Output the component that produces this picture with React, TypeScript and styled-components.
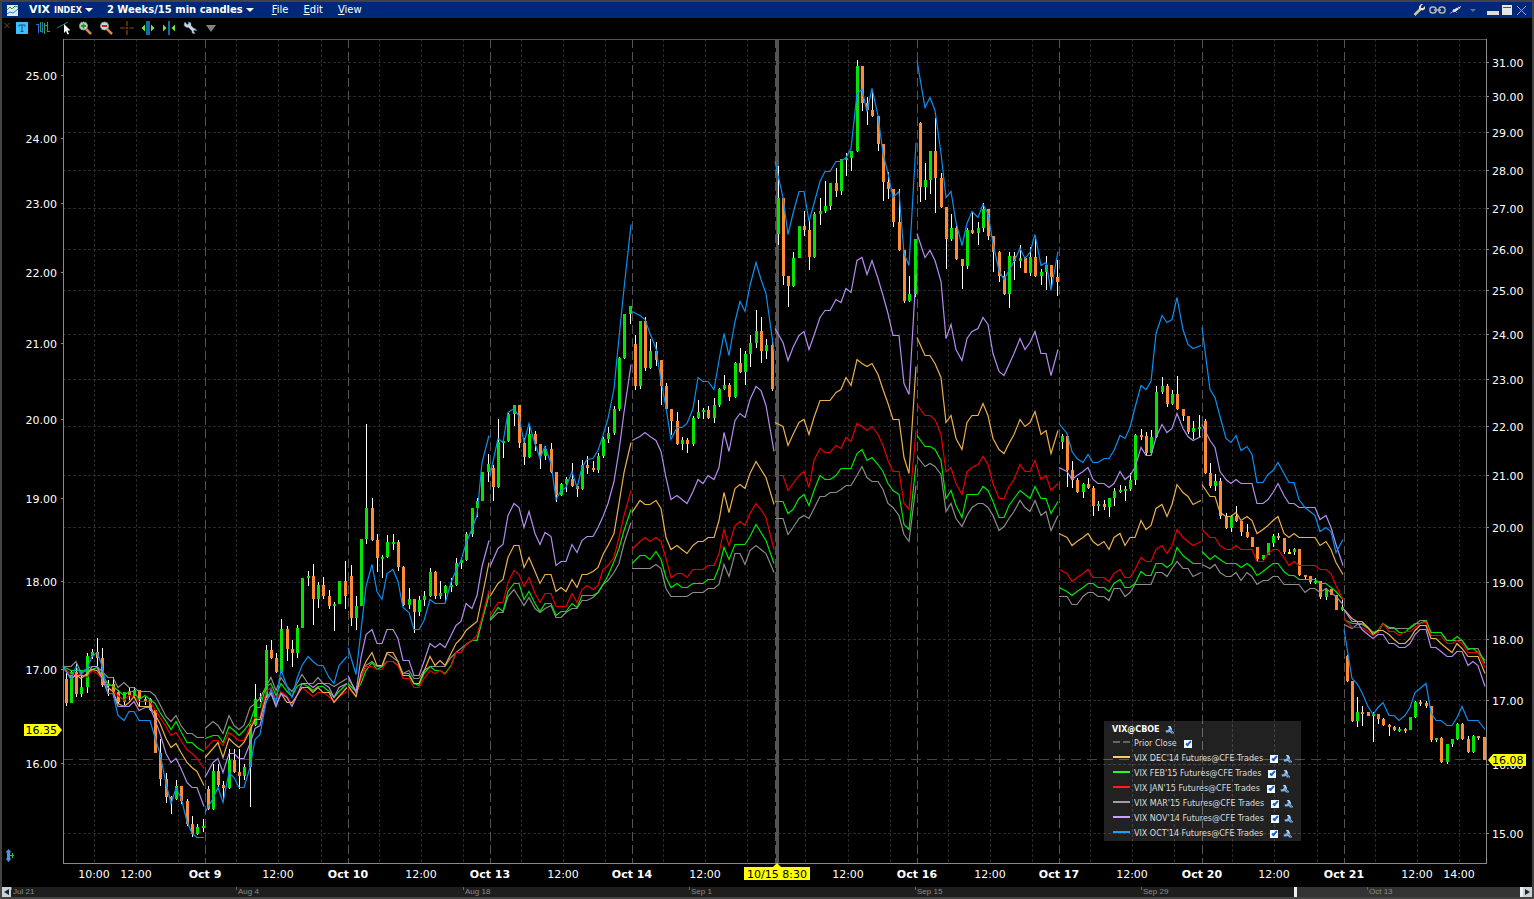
import React from "react";
import styled, { createGlobalStyle } from "styled-components";

const GlobalStyle = createGlobalStyle`
  *, *::before, *::after { box-sizing: border-box; }
  body {
    margin: 0;
    background: #000;
    font-family: "DejaVu Sans", Verdana, sans-serif;
  }
`;

const colors = {
  frame: "#434343",
  title: "#002878",
  up: "#00e600",
  down: "#ff8c32",
  flat: "#ffff00",
  axis: "#8a8a8a",
  grid: "#292929",
  day: "#545454",
  tag: "#ffff00",
  oct: "#0c8ff2",
  nov: "#b48cf0",
  dec: "#eab04e",
  jan: "#e80000",
  feb: "#00e800",
  mar: "#8c8c8c",
};

/* ---------- layout ---------- */

const Frame = styled.main`
  border: 2px solid ${colors.frame};
  background: #000;
  color: #fff;
  min-width: 900px;
`;

const TitleBar = styled.header`
  display: flex;
  align-items: center;
  height: 16px;
  padding: 0 3px 0 5px;
  background: ${colors.title};
`;

const TitleIcon = styled.svg`
  display: block;
  width: 11px;
  height: 11px;
  margin-right: 11px;
`;

const TitleButton = styled.button<{ $size: number; $gap: number }>`
  display: flex;
  align-items: center;
  gap: 3px;
  margin: 0 ${(p) => p.$gap}px 0 0;
  padding: 0;
  border: 0;
  background: none;
  color: #fff;
  font: bold ${(p) => p.$size}px/16px "DejaVu Sans", Verdana, sans-serif;
  white-space: nowrap;
`;

const Small = styled.span`
  font-size: 8px;
`;

const Caret = styled.span<{ $color: string; $w: number }>`
  border: ${(p) => p.$w}px solid transparent;
  border-top-color: ${(p) => p.$color};
  border-bottom: 0;
`;

const Menu = styled.nav`
  display: flex;
  gap: 15px;
  flex: 1;
`;

const MenuButton = styled.button`
  padding: 0;
  border: 0;
  background: none;
  color: #fff;
  font: 10px/16px "DejaVu Sans", Verdana, sans-serif;
`;

const WindowTools = styled.div`
  display: flex;
  align-items: center;
`;

const IconButton = styled.button<{ $w: number }>`
  display: flex;
  align-items: center;
  justify-content: center;
  width: ${(p) => p.$w}px;
  height: 16px;
  padding: 0;
  border: 0;
  background: none;
`;

const ToolBar = styled.div`
  display: flex;
  align-items: center;
  height: 20px;
`;

const Glyph = styled.svg`
  display: block;
  flex: none;
`;

const ChartArea = styled.section`
  position: relative;
`;

const ChartSvg = styled.svg`
  display: block;
  width: 100%;
  height: auto;
`;

const AxisText = styled.text`
  font: 11px "DejaVu Sans", Verdana, sans-serif;
  fill: #fff;
`;

const DayText = styled(AxisText)`
  font-weight: bold;
`;

const TagText = styled(AxisText)`
  fill: #000;
`;

const Legend = styled.div`
  position: absolute;
  right: 231px;
  bottom: 46px;
  width: 197px;
  height: 120px;
  padding: 2px 0 0 8px;
  background: rgba(255, 255, 255, 0.13);
  color: #dcdcdc;
  font-size: 8px;
`;

const LegendTitle = styled.div`
  display: flex;
  align-items: center;
  gap: 5px;
  height: 13px;
  color: #fff;
  font-weight: bold;
`;

const LegendRow = styled.label`
  display: flex;
  align-items: center;
  gap: 4px;
  height: 15px;
  padding-left: 1px;
  white-space: nowrap;
`;

const Swatch = styled.span<{ $color: string; $dashed?: boolean }>`
  width: 17px;
  height: 2px;
  margin-top: -3px;
  background: ${(p) =>
    p.$dashed
      ? `linear-gradient(90deg, ${p.$color} 7px, transparent 7px 10px, ${p.$color} 10px)`
      : p.$color};
`;

const Check = styled.input`
  appearance: none;
  position: relative;
  width: 8px;
  height: 8px;
  margin: 0 1px 0 3px;
  background: #f4f8ff;

  &:checked::after {
    content: "";
    position: absolute;
    left: 3px;
    top: 0;
    width: 3px;
    height: 6px;
    border: solid #1464d2;
    border-width: 0 2px 2px 0;
    transform: rotate(42deg);
  }
`;

const Strip = styled.footer`
  display: flex;
  height: 10px;
  background: #1e1e1e;
`;

const StripButton = styled.button`
  display: flex;
  align-items: center;
  justify-content: center;
  width: 9px;
  height: 10px;
  padding: 0;
  border: 0;
  background: #d0d0d0;
`;

const Track = styled.div`
  position: relative;
  flex: 1;
`;

const Thumb = styled.div`
  position: absolute;
  left: 84.85%;
  right: 0;
  top: 0;
  bottom: 0;
  background: #333;
  border: solid #eee;
  border-width: 0 3px;
`;

const TrackDates = styled.div`
  position: relative;
  display: grid;
  grid-template-columns: 225fr 227fr 226fr 226fr 226fr 226fr 156fr;
`;

const TrackDate = styled.span`
  padding-left: 2px;
  color: #8c8c8c;
  font: 8px/9px "Liberation Sans", Arial, sans-serif;
  background: linear-gradient(#666, #666) 0 0 / 1px 3px no-repeat;
`;

/* ---------- data ---------- */

type Candle = [number, number, number, number, string];

/* One string for each session: high, body top, body bottom, low, direction. */
const candleText = [
  "671,679,703,706,d 671,672,703,703,u 664,672,694,697,d 672,687,694,697,u 653,656,687,693,u 649,652,656,659,u 638,652,658,666,d 648,658,685,687,d 680,684,686,696,u 677,684,692,693,d 690,692,702,704,d 692,692,702,705,u 688,692,695,700,d 687,690,696,697,u 690,690,699,707,d 697,699,701,705,d 698,699,710,711,d 710,710,753,753,d 739,753,779,786,d 773,779,797,803,d 796,797,799,814,d 780,786,799,800,u 786,786,801,804,d 799,801,824,826,d 816,824,834,837,d 824,827,834,835,u 819,826,828,832,u",
  "786,789,809,810,d 764,771,809,810,u 764,771,785,787,d 781,785,788,800,d 749,760,788,789,u 749,760,772,773,d 749,772,776,789,d 764,767,776,780,u 724,725,767,807,u 684,699,725,726,u 693,697,699,702,u 645,650,697,698,u 640,650,658,659,d 653,658,672,673,d 619,629,672,673,u 626,629,649,661,d 640,649,653,667,d 625,628,653,658,u 578,578,628,628,u 571,576,578,586,u 564,576,599,625,d 582,585,599,608,u 577,585,596,599,d 590,596,606,609,d 602,604,606,631,u 581,581,604,604,u 561,581,596,609,d",
  "565,576,618,626,d 596,606,618,630,u 539,539,606,606,u 424,508,539,544,u 498,508,540,541,d 534,540,558,572,d 555,557,559,578,u 535,542,557,558,u 534,542,544,550,u 540,542,567,571,d 566,567,605,606,d 588,599,605,609,u 599,599,612,633,d 596,600,612,616,u 591,596,600,606,u 568,572,596,597,u 571,572,596,599,d 581,593,596,599,u 585,586,593,603,u 578,585,587,592,u 558,563,585,586,u 559,560,563,569,u 532,534,560,561,u 508,508,534,537,u 498,501,508,517,u 472,472,501,501,u 454,464,472,482,u",
  "465,468,487,501,d 419,442,487,488,u 440,441,443,458,u 413,414,441,442,u 405,405,414,426,u 405,405,443,448,d 438,443,457,465,d 424,434,457,458,u 431,434,444,451,d 444,444,456,469,d 446,449,456,460,u 443,449,472,473,d 472,472,495,502,d 483,484,495,496,u 477,479,484,492,u 463,479,486,487,d 484,486,489,497,d 460,465,489,490,u 456,465,468,474,d 461,468,470,472,d 453,456,470,473,u 437,439,456,458,u 427,433,439,443,u 406,409,433,435,u 357,358,409,411,u 314,314,358,359,u 306,306,314,324,u",
  "335,344,386,390,d 321,321,386,389,u 317,321,368,371,d 339,351,368,369,u 342,351,360,366,d 360,360,386,405,d 383,386,409,409,d 409,409,421,435,d 412,421,444,445,d 437,440,444,450,u 438,440,444,453,d 416,418,444,446,u 400,412,418,419,u 408,410,412,419,u 406,410,418,419,d 398,405,418,423,u 388,389,405,407,u 375,385,389,390,u 383,385,397,401,d 362,363,397,398,u 348,363,372,373,d 351,354,372,385,u 335,343,354,367,u 310,331,343,348,u 317,331,351,363,d 339,345,351,359,u 340,345,389,391,d",
  "166,198,234,245,u 198,198,276,285,d 276,276,286,307,d 252,258,286,287,u 226,226,258,258,u 211,226,230,236,d 220,230,257,270,d 212,214,257,258,u 198,211,214,225,u 181,206,211,213,u 183,183,206,210,u 168,183,191,197,d 159,159,191,195,u 153,158,160,176,u 151,151,158,171,u 60,66,151,152,u 66,66,103,111,d 97,103,110,125,d 92,110,116,117,d 116,116,144,151,d 144,144,182,201,d 172,182,189,199,d 189,189,222,227,d 189,222,250,251,d 250,250,301,303,d 276,294,301,302,u 239,239,294,297,u",
  "122,123,187,202,d 163,180,187,200,u 151,151,180,194,u 118,151,178,213,d 173,178,207,208,d 207,207,239,269,d 214,228,239,241,u 226,228,259,260,d 259,259,266,289,d 228,230,266,269,u 212,230,233,234,d 222,228,233,245,u 203,209,228,232,u 209,209,236,240,d 236,236,252,272,d 251,252,276,282,d 271,276,294,295,d 252,256,294,308,u 252,256,261,280,d 245,258,261,268,u 258,258,273,273,d 247,257,273,276,u 239,257,276,277,d 269,272,276,285,u 256,265,272,290,u 265,265,277,287,d 260,277,282,296,d",
  "434,436,442,449,u 435,436,470,487,d 461,470,480,488,d 478,480,492,493,d 483,484,492,498,u 478,484,488,489,d 486,488,506,516,d 501,504,506,511,u 500,504,507,510,d 498,498,507,517,u 488,491,498,506,u 485,490,492,493,u 486,489,491,501,u 473,480,489,491,u 434,435,480,485,u 429,435,437,440,d 432,436,453,455,d 430,437,453,455,u 386,392,437,438,u 377,386,392,394,u 384,386,404,407,d 390,394,404,405,u 376,394,409,410,d 409,409,416,421,d 416,416,432,434,d 421,428,432,439,u 415,427,429,437,u",
  "419,421,473,474,d 463,473,486,488,d 474,481,486,491,u 478,481,516,519,d 513,516,528,529,d 515,516,528,532,u 506,516,521,522,d 521,521,532,536,d 524,532,537,538,d 537,537,547,547,d 547,547,559,561,d 555,555,559,560,u 543,543,555,555,u 534,536,543,547,u 533,536,538,540,d 538,538,552,554,d 549,552,554,554,f 548,549,552,555,u 549,549,575,576,d 575,575,577,579,d 576,576,582,584,d 578,581,583,584,u 581,581,597,599,d 588,589,597,600,u 589,589,595,595,d 595,595,610,610,d 598,607,610,611,u",
  "655,656,681,682,d 681,681,721,722,d 697,712,721,727,u 706,712,714,726,d 712,712,716,716,d 712,714,716,742,u 714,714,719,724,d 718,719,725,726,d 724,725,727,736,d 726,727,730,731,d 727,729,731,732,u 728,729,731,733,d 717,717,730,730,u 701,702,717,718,u 700,702,704,706,d 701,703,706,708,d 706,706,740,742,d 738,738,740,742,u 737,738,762,763,d 744,744,762,764,u 739,739,744,747,u 723,724,739,740,u 723,724,739,740,d 736,739,752,753,d 735,736,752,753,u 736,736,738,740,d 737,737,760,760,d",
];

const sessions: Candle[][] = candleText.map((day) =>
  day.split(" ").map((item) => {
    const [h, t, b, l, d] = item.split(",");
    return [Number(h), Number(t), Number(b), Number(l), d];
  })
);

interface Series {
  name: string;
  color: string;
  swatch: string;
  days: number[][];
}

const futures: Series[] = [
  {
    name: "VIX DEC'14 Futures@CFE Trades",
    color: colors.dec,
    swatch: "#ffc864",
    days: [
      [666,678,674,678,673,669,670,677,687,691,703,706,702,696,706,706,706,714,723,738,747,743,752,762,767,771,785],
      [757,748,742,757,738,743,747,742,730,719,719,697,692,705,693,702,702,695,687,687,692,687,692,692,702,696,687],
      [685,696,673,661,652,665,665,652,652,661,675,675,683,683,671,656,665,660,665,653,643,638,630,625,621,597,562],
      [596,583,579,557,545,545,567,557,571,583,574,574,591,587,591,579,587,574,574,571,567,554,545,533,503,472,442],
      [512,500,504,504,500,508,537,549,545,549,553,545,541,541,537,537,520,492,512,488,484,488,473,461,469,477,504],
      [422,426,445,434,422,419,434,417,400,400,400,392,389,377,385,359,363,366,363,374,389,403,419,419,457,473,366],
      [337,355,355,363,377,422,415,438,449,422,415,415,403,415,438,449,453,443,434,419,426,422,411,434,430,453,430],
      [533,537,545,541,537,533,541,545,541,549,537,533,545,537,537,520,529,525,508,504,516,504,484,492,496,504,500],
      [484,496,496,512,516,516,512,520,516,520,533,529,525,520,516,533,537,533,537,537,537,537,545,541,549,562,574],
      [609,618,621,621,627,634,630,630,634,639,643,643,638,630,625,625,638,638,643,648,652,643,648,656,656,656,673],
    ],
  },
  {
    name: "VIX FEB'15 Futures@CFE Trades",
    color: colors.feb,
    swatch: "#1eff1e",
    days: [
      [666,670,670,670,671,669,667,675,683,686,690,695,691,691,699,695,699,703,712,721,729,721,731,742,742,747,751],
      [738,735,735,742,726,730,735,730,722,707,707,686,683,695,683,691,696,686,683,686,690,686,686,691,697,691,683],
      [683,691,683,670,662,669,666,661,661,665,673,673,683,685,673,666,670,670,673,665,652,652,644,640,640,620,595],
      [619,607,611,591,583,583,599,591,603,611,603,603,615,611,611,603,607,595,595,595,592,584,575,561,548,530,509],
      [563,555,555,559,551,559,577,587,583,587,587,583,583,583,579,579,567,547,559,544,544,544,536,524,532,540,563],
      [501,501,513,509,498,494,505,490,475,479,479,475,468,468,468,453,449,460,457,464,471,483,490,494,524,529,464],
      [435,446,446,449,460,498,490,505,517,494,494,494,486,490,501,517,517,505,498,490,494,498,486,498,498,513,501],
      [587,591,595,591,587,583,583,587,587,591,583,579,587,587,583,571,575,575,563,563,567,563,547,555,559,563,563],
      [551,559,555,559,563,563,563,567,563,567,575,571,567,563,563,571,575,575,579,579,579,579,583,583,587,591,599],
      [619,623,623,623,627,632,630,623,627,627,632,632,627,623,623,620,632,632,632,640,640,636,640,648,648,652,660],
    ],
  },
  {
    name: "VIX JAN'15 Futures@CFE Trades",
    color: colors.jan,
    swatch: "#ff1e1e",
    days: [
      [666,674,674,674,677,670,673,678,687,691,695,700,695,696,701,701,701,709,717,726,735,732,740,749,753,758,768],
      [749,740,740,745,732,736,740,740,726,717,717,691,687,700,691,696,704,695,687,692,696,692,692,696,701,696,691],
      [687,696,678,666,666,669,669,661,661,665,678,678,687,687,678,670,673,670,674,666,652,652,644,640,635,617,590],
      [615,602,602,582,570,574,586,577,593,602,593,593,606,606,606,593,602,589,585,589,585,569,565,557,537,515,490],
      [549,541,537,541,537,541,558,577,573,573,577,569,569,569,565,565,553,529,545,525,521,525,513,503,509,517,549],
      [475,475,490,483,475,471,487,460,448,452,452,445,448,437,441,423,426,430,426,434,445,460,471,471,503,509,430],
      [404,415,415,419,434,471,467,483,494,471,467,464,456,464,483,498,498,486,479,464,471,471,460,479,475,490,483],
      [569,573,581,577,573,569,577,577,577,581,573,569,577,577,569,557,561,561,549,545,553,545,529,537,541,545,541],
      [529,537,537,545,549,549,545,549,549,549,561,561,553,549,549,557,565,561,565,565,565,565,569,569,573,585,599],
      [618,627,627,627,631,635,631,623,631,631,635,631,631,627,623,622,635,635,635,643,643,640,643,652,652,652,667],
    ],
  },
  {
    name: "VIX MAR'15 Futures@CFE Trades",
    color: colors.mar,
    swatch: "#a0a0a0",
    days: [
      [666,666,661,672,668,666,666,671,677,677,687,682,687,687,691,691,691,695,704,716,721,715,725,733,733,737,737],
      [728,721,725,733,715,725,729,725,707,703,698,686,677,690,677,686,691,683,674,683,683,677,683,683,686,683,678],
      [678,690,677,665,661,666,666,653,657,661,673,670,678,678,670,666,666,666,666,657,652,648,644,640,640,620,592],
      [620,612,612,596,589,597,605,597,608,612,608,605,617,617,612,608,608,600,600,597,592,584,580,572,563,543,522],
      [568,568,568,568,564,568,588,596,596,596,596,592,592,592,588,588,584,564,576,553,553,564,550,545,549,553,572],
      [518,518,534,527,518,515,518,508,496,496,492,492,489,485,485,475,466,477,481,481,489,503,507,515,534,541,485],
      [456,466,463,466,474,511,503,518,526,515,507,503,503,507,515,530,526,518,511,500,507,511,500,515,511,530,515],
      [596,596,604,604,596,592,592,596,596,600,588,588,596,592,584,584,584,584,572,572,576,568,561,568,568,576,572],
      [564,568,564,572,576,576,572,580,572,576,584,580,580,576,576,584,584,584,584,592,588,588,592,588,592,596,604],
      [624,628,624,624,628,632,632,623,628,628,628,628,628,624,620,620,632,632,632,640,640,640,640,649,648,648,663],
    ],
  },
  {
    name: "VIX NOV'14 Futures@CFE Trades",
    color: colors.nov,
    swatch: "#c8a0ff",
    days: [
      [666,678,675,675,675,666,666,677,693,693,706,706,706,701,710,707,707,719,733,753,762,758,768,782,787,787,806],
      [777,762,758,772,753,753,758,758,743,728,725,701,693,706,693,697,706,695,683,683,687,683,683,687,697,687,683],
      [675,692,657,634,629,643,643,629,629,638,660,660,675,675,661,643,647,643,647,635,625,621,603,608,595,566,540],
      [566,548,544,515,503,507,527,511,533,544,532,536,565,561,561,544,552,540,536,536,527,516,503,481,450,412,364],
      [440,436,432,436,440,451,477,499,495,499,503,491,479,483,475,479,467,432,451,420,413,417,399,386,390,405,451],
      [328,342,360,347,335,331,349,335,317,310,310,299,302,288,292,260,257,274,260,278,295,313,335,335,383,394,274],
      [233,257,250,260,281,338,324,349,360,338,331,328,317,324,353,371,375,364,353,338,349,342,331,353,353,375,349],
      [467,471,479,475,471,467,479,483,483,487,483,471,479,475,467,447,455,455,437,424,432,428,413,428,436,440,436],
      [424,440,447,471,479,483,479,483,483,483,503,503,499,492,483,495,503,503,507,507,507,507,519,515,527,544,565],
      [609,621,621,629,634,638,634,634,643,643,647,647,643,634,629,629,647,647,651,656,656,651,651,665,661,665,686],
    ],
  },
  {
    name: "VIX OCT'14 Futures@CFE Trades",
    color: colors.oct,
    swatch: "#1ea0ff",
    days: [
      [666,679,666,674,668,656,652,665,693,693,715,720,711,711,720,720,720,737,753,783,803,788,797,821,833,837,837],
      [812,798,787,802,772,777,787,787,767,739,734,702,689,702,669,686,697,678,665,656,661,665,665,677,683,665,656],
      [647,674,630,586,564,591,599,573,569,581,607,612,629,629,620,599,603,603,603,582,570,560,543,528,515,462,435],
      [475,438,442,412,408,416,442,423,443,458,446,463,499,490,487,471,487,467,459,458,450,435,418,388,337,288,224],
      [311,315,319,333,348,380,407,439,427,427,423,408,377,381,381,389,360,333,355,321,301,311,285,262,279,293,351],
      [161,197,234,213,191,191,221,203,181,171,171,161,161,157,148,93,89,111,88,115,153,173,197,191,253,265,142],
      [60,107,97,110,153,197,191,222,245,223,211,217,204,213,243,270,279,270,261,248,258,252,234,265,262,290,251],
      [423,433,451,458,462,454,462,462,458,458,450,435,438,427,407,385,389,381,333,315,322,319,297,329,344,348,345],
      [327,389,397,416,438,442,435,450,446,454,482,482,474,470,462,473,482,482,499,507,511,515,531,527,531,552,539],
      [629,678,683,692,706,714,707,702,715,715,720,715,707,692,688,683,712,720,720,725,725,717,706,720,720,720,729],
    ],
  },
];

/* Drawing order of the lines, back to front. */
const drawOrder = [3, 1, 2, 0, 4, 5];

const dayLabels = ["Oct 9", "Oct 10", "Oct 13", "Oct 14", "", "Oct 16", "Oct 17", "Oct 20", "Oct 21"];
const rightTicks = [62, 96, 132, 170, 208, 249, 290, 334, 379, 426, 475, 527, 582, 639, 700, 764, 833];
const leftTicks = [75, 138, 203, 272, 343, 419, 498, 581, 669, 763];
const stripDates = ["Jul 21", "Aug 4", "Aug 18", "Sep 1", "Sep 15", "Sep 29", "Oct 13"];

const LEFT = 63;
const RIGHT = 1486;
const TOP = 39;
const BOTTOM = 863;
const DAY = 1423 / 10;
const BAR = DAY / 27;

/* Session starts and hour marks fall on whole columns so that the 1px rules stay crisp. */
const dayX = (day: number) => Math.floor(LEFT + day * DAY + 0.65);
const hourX = (day: number, bars: number) => Math.floor(LEFT + day * DAY + bars * BAR - 0.2);
const barX = (day: number, bar: number) => Math.floor(dayX(day) + (bar + 0.5) * BAR + 0.4);

const linePoints = (day: number, ys: number[]) =>
  ys
    .map((y, i) => {
      const x = i === 0 ? dayX(day) : i === 26 ? dayX(day + 1) - 1 : barX(day, i);
      return `${x},${y}`;
    })
    .join(" ");

const bodyColor = (d: string) => (d === "u" ? colors.up : d === "d" ? colors.down : colors.flat);

/* ---------- chart ---------- */

function Grid() {
  const hours = [6, 14, 22];
  return (
    <g shapeRendering="crispEdges" fill="none">
      <g stroke={colors.grid} strokeDasharray="3 2">
        {rightTicks.map((y) => (
          <path key={y} d={`M${LEFT} ${y + 0.5}H${RIGHT}`} />
        ))}
        {sessions.map((_, d) =>
          hours.map((h) => (
            <path key={`${d}-${h}`} d={`M${hourX(d, h) + 0.5} ${TOP}V${BOTTOM}`} />
          ))
        )}
      </g>
      <g stroke={colors.day} strokeDasharray="9 4">
        {dayLabels.map((_, d) => (
          <path key={d} d={`M${dayX(d + 1) + 0.5} ${TOP}V${BOTTOM}`} />
        ))}
      </g>
      <path d={`M${LEFT} 759.5H${RIGHT}`} stroke="#464646" strokeDasharray="10 6" />
      <path d={`M777.5 ${TOP}V${BOTTOM}`} stroke="#545454" strokeWidth="3" />
    </g>
  );
}

function Candles() {
  return (
    <g shapeRendering="crispEdges">
      {sessions.map((bars, d) =>
        bars.map(([h, t, b, l, dir], i) => {
          const x = barX(d, i);
          return (
            <g key={`${d}-${i}`}>
              <rect x={x} y={h} width="1" height={Math.max(1, l - h)} fill="#fff" />
              <rect x={x - 1} y={t} width="3" height={Math.max(2, b - t)} fill={bodyColor(dir)} />
            </g>
          );
        })
      )}
    </g>
  );
}

function Lines() {
  return (
    <g fill="none" strokeWidth="1.2">
      {drawOrder.map((n) =>
        futures[n].days.map((ys, d) => (
          <polyline key={`${n}-${d}`} points={linePoints(d, ys.map((y) => y + 0.5))} stroke={futures[n].color} />
        ))
      )}
    </g>
  );
}

function Axes() {
  return (
    <g>
      <g stroke={colors.axis} fill="none" shapeRendering="crispEdges">
        <path d={`M${LEFT} ${TOP + 0.5}H${RIGHT}`} stroke="#555" />
        <path d={`M${LEFT + 0.5} ${TOP}V${BOTTOM + 0.5}H${RIGHT + 0.5}V${TOP}`} />
        {leftTicks.map((y) => (
          <path key={y} d={`M61 ${y + 0.5}H63`} />
        ))}
        {rightTicks.map((y) => (
          <path key={y} d={`M1487 ${y + 0.5}H1489`} />
        ))}
      </g>
      {leftTicks.map((y, i) => (
        <AxisText key={y} x="57" y={y + 5} textAnchor="end">
          {(25 - i).toFixed(2)}
        </AxisText>
      ))}
      {rightTicks.map((y, i) => (
        <AxisText key={y} x="1492" y={y + 5}>
          {(31 - i).toFixed(2)}
        </AxisText>
      ))}
      <AxisText x={hourX(0, 6)} y="878" textAnchor="middle">
        10:00
      </AxisText>
      {sessions.map((_, d) => (
        <AxisText key={d} x={hourX(d, 14)} y="878" textAnchor="middle">
          12:00
        </AxisText>
      ))}
      <AxisText x={hourX(9, 22)} y="878" textAnchor="middle">
        14:00
      </AxisText>
      {dayLabels.map((t, d) => (
        <DayText key={d} x={dayX(d + 1)} y="878" textAnchor="middle">
          {t}
        </DayText>
      ))}
      <g fill={colors.tag}>
        <path d="M24 724H57L62 730L57 736H24Z" />
        <path d="M1526 754H1493L1488 760L1493 766H1526Z" />
        <path d="M744 867H773L777 863L781 867H810V880H744Z" />
      </g>
      <TagText x="57" y="734" textAnchor="end">
        16.35
      </TagText>
      <TagText x="1492" y="764">
        16.08
      </TagText>
      <TagText x="777" y="878" textAnchor="middle">
        10/15 8:30
      </TagText>
      <path d="M8.500 849l3 3.500h-1.500v6h1.500l-3 3.500-3-3.500H7v-6H5.500z" fill="#4696dc" />
      <path d="M10 855.500h4M12.500 853v5" stroke="#1ebe50" />
    </g>
  );
}

/* ---------- icons ---------- */

function WrenchIcon() {
  return (
    <Glyph width="14" height="14" viewBox="0 0 14 14">
      <path
        d="M2 1l2 2.500 1.500-.5L5.500 1c2 0 3 1.500 2.500 3.500l3 3c1.500-.2 2.500 1 2.500 2.500l-2-1-1 1 1.500 2.500c-2 .5-3.500-.5-3-2.500l-3.500-3.500C3 7 1 5.500 1 3z"
        fill="#c8d4e6"
        stroke="#6a7c96"
        strokeWidth=".5"
      />
    </Glyph>
  );
}

function LegendWrench() {
  return (
    <Glyph width="9" height="9" viewBox="0 0 9 9">
      <path d="M3 1h2.500L7 3.500V5.500L9 7.500V8.500H6L5 7 3 7.500H1L.5 5.500 3 5 4 3.500z" fill="#7fb0e0" />
      <path d="M3.500 1.500h1.500l1 2.500" stroke="#c8e0f8" fill="none" />
      <path d="M5.500 5l2.500 3" stroke="#46719f" />
    </Glyph>
  );
}

function ZoomIcon({ plus }: { plus?: boolean }) {
  return (
    <Glyph width="14" height="14" viewBox="0 0 14 14">
      <path d="M8 8l5 5" stroke="#d28c3c" strokeWidth="2.500" />
      <circle cx="5.500" cy="5" r="4" fill="#cfd8d8" stroke="#8c9696" />
      {plus ? (
        <path d="M3 5h5M5.500 2.500v5" stroke="#14a014" strokeWidth="1.800" />
      ) : (
        <path d="M3 5h5" stroke="#d21e1e" strokeWidth="2" />
      )}
    </Glyph>
  );
}

const tools = [
  {
    label: "Text",
    icon: (
      <Glyph width="12" height="12" viewBox="0 0 12 12">
        <path d="M0 0h12v12H0z" fill="#3cbeff" />
        <path d="M3 4.500V3h6v1.500M6 3v6.500M4.500 9.500h3" stroke="#145078" fill="none" />
      </Glyph>
    ),
  },
  {
    label: "Bars",
    icon: (
      <Glyph width="14" height="14" viewBox="0 0 14 14" fill="none" shapeRendering="crispEdges">
        <path d="M0 3.500h2M2.500 3v9M6.500 1v11M4 10.500h2" stroke="#3c64e6" />
        <path d="M4.500 1v9M8.500 2v11M9 4.500h2M11.500 1v10M12 10.500h2" stroke="#1eaa3c" />
      </Glyph>
    ),
  },
  {
    label: "Draw line",
    icon: (
      <Glyph width="14" height="14" viewBox="0 0 14 14">
        <path d="M0 7L11 1" stroke="#2878b4" />
        <path d="M7 3v9l2-2 1.500 3.500 1.500-.6-1.500-3.400h3z" fill="#fff" />
      </Glyph>
    ),
  },
  { label: "Zoom in", icon: <ZoomIcon plus /> },
  { label: "Zoom out", icon: <ZoomIcon /> },
  {
    label: "Crosshair",
    icon: (
      <Glyph width="14" height="14" viewBox="0 0 14 14">
        <path d="M0 7h5M6 7h2M9 7h5M7 0v5M7 6v2M7 9v5" stroke="#8c4614" strokeWidth="1.200" />
      </Glyph>
    ),
  },
  {
    label: "Widen bars",
    icon: (
      <Glyph width="14" height="14" viewBox="0 0 14 14">
        <path d="M5 0h4v14H5z" fill="#0a6eaa" />
        <path d="M4 3.500v7L.5 7zM10 3.500v7L13.500 7z" fill="#78e632" />
      </Glyph>
    ),
  },
  {
    label: "Narrow bars",
    icon: (
      <Glyph width="14" height="14" viewBox="0 0 14 14">
        <path d="M6 0h2v14H6z" fill="#0a6eaa" />
        <path d="M1 3.500v7L4.500 7zM13 3.500v7L9.500 7z" fill="#78e632" />
      </Glyph>
    ),
  },
  { label: "Settings", icon: <WrenchIcon /> },
];

/* ---------- page ---------- */

export default function App() {
  return (
    <>
      <GlobalStyle />
      <Frame>
        <TitleBar>
          <TitleIcon viewBox="0 0 11 11">
            <path d="M0 0h11v11H0z" fill="#dceaf5" />
            <path d="M0 5l3-3 2 2 3-3 3 1" stroke="#28a03c" fill="none" />
            <path d="M0 9l3-2 3 1 5-4" stroke="#3c78c8" fill="none" />
          </TitleIcon>
          <TitleButton $size={11} $gap={14}>
            <span>
              VIX <Small>INDEX</Small>
            </span>
            <Caret $color="#fff" $w={4} />
          </TitleButton>
          <TitleButton $size={10} $gap={18}>
            2 Weeks/15 min candles
            <Caret $color="#fff" $w={4} />
          </TitleButton>
          <Menu>
            <MenuButton><u>F</u>ile</MenuButton>
            <MenuButton><u>E</u>dit</MenuButton>
            <MenuButton><u>V</u>iew</MenuButton>
          </Menu>
          <WindowTools>
            <IconButton $w={16} aria-label="Configure">
              <Glyph width="12" height="12" viewBox="0 0 12 12">
                <path d="M1.500 11L8 4.500" stroke="#d8c8a0" strokeWidth="2.500" />
                <path d="M10 0L8 2v2h2l2-2v3L9.500 6.500 6 5.500 6 2.500 8 0z" fill="#ebe1c8" />
              </Glyph>
            </IconButton>
            <IconButton $w={21} aria-label="Link">
              <Glyph width="17" height="8" viewBox="0 0 17 8" fill="none" stroke="#b4b4b4" strokeWidth="1.500">
                <rect x="1" y="1" width="6" height="6" rx="2.500" />
                <rect x="10" y="1" width="6" height="6" rx="2.500" />
                <path d="M5 4h7" />
              </Glyph>
            </IconButton>
            <IconButton $w={14} aria-label="Pin">
              <Glyph width="11" height="8" viewBox="0 0 11 8">
                <path d="M0 7.500L3.500 5" stroke="#a0a0a0" />
                <path d="M3 5.500L8 2.500" stroke="#e6e6dc" strokeWidth="2.500" />
                <path d="M3.500 3l3 3.500M8 1l2 1.500M8 2.500L11 .5" stroke="#dcdcd2" />
              </Glyph>
            </IconButton>
            <IconButton $w={22} aria-label="More">
              <Caret $color="#6e6e78" $w={3} />
            </IconButton>
            <IconButton $w={17} aria-label="Minimize">
              <Glyph width="12" height="10" viewBox="0 0 12 10">
                <path d="M0 6h12v4H0z" fill="#dcdcdc" />
              </Glyph>
            </IconButton>
            <IconButton $w={12} aria-label="Maximize">
              <Glyph width="10" height="10" viewBox="0 0 10 10">
                <path d="M0 0h10v10H0z" fill="#e6e6e6" />
                <path d="M1 2.500h8" stroke="#555" />
              </Glyph>
            </IconButton>
            <IconButton $w={16} aria-label="Close">
              <Glyph width="9" height="9" viewBox="0 0 9 9">
                <path d="M0 0l9 9M9 0L0 9" stroke="#a0a8b8" />
              </Glyph>
            </IconButton>
          </WindowTools>
        </TitleBar>

        <ToolBar>
          <IconButton $w={9} aria-label="Hide toolbar">
            <Glyph width="6" height="12" viewBox="0 0 6 12">
              <path d="M0.500 1l5 5M5.500 1l-5 5" stroke="#823c3c" />
            </Glyph>
          </IconButton>
          {tools.map((t) => (
            <IconButton key={t.label} $w={21} aria-label={t.label}>
              {t.icon}
            </IconButton>
          ))}
          <IconButton $w={21} aria-label="More tools">
            <Glyph width="10" height="8" viewBox="0 0 10 8">
              <path d="M0 1h10L5 8z" fill="#828282" />
            </Glyph>
          </IconButton>
        </ToolBar>

        <ChartArea>
          <ChartSvg viewBox="2 38 1530 849" role="img" aria-label="VIX index chart">
            <Grid />
            <Candles />
            <Lines />
            <Axes />
          </ChartSvg>
          <Legend>
            <LegendTitle>
              VIX@CBOE
              <LegendWrench />
            </LegendTitle>
            <LegendRow>
              <Swatch $color="#646464" $dashed />
              Prior Close
              <Check type="checkbox" defaultChecked />
            </LegendRow>
            {futures.map((s) => (
              <LegendRow key={s.name}>
                <Swatch $color={s.swatch} />
                {s.name}
                <Check type="checkbox" defaultChecked />
                <LegendWrench />
              </LegendRow>
            ))}
          </Legend>
        </ChartArea>

        <Strip>
          <StripButton aria-label="Scroll left">
            <Glyph width="5" height="6" viewBox="0 0 5 6">
              <path d="M5 0v6L0 3z" fill="#14283c" />
            </Glyph>
          </StripButton>
          <Track>
            <Thumb />
            <TrackDates>
              {stripDates.map((d) => (
                <TrackDate key={d}>{d}</TrackDate>
              ))}
            </TrackDates>
          </Track>
          <StripButton aria-label="Scroll right">
            <Glyph width="5" height="6" viewBox="0 0 5 6">
              <path d="M0 0v6l5-3z" fill="#14283c" />
            </Glyph>
          </StripButton>
        </Strip>
      </Frame>
    </>
  );
}
